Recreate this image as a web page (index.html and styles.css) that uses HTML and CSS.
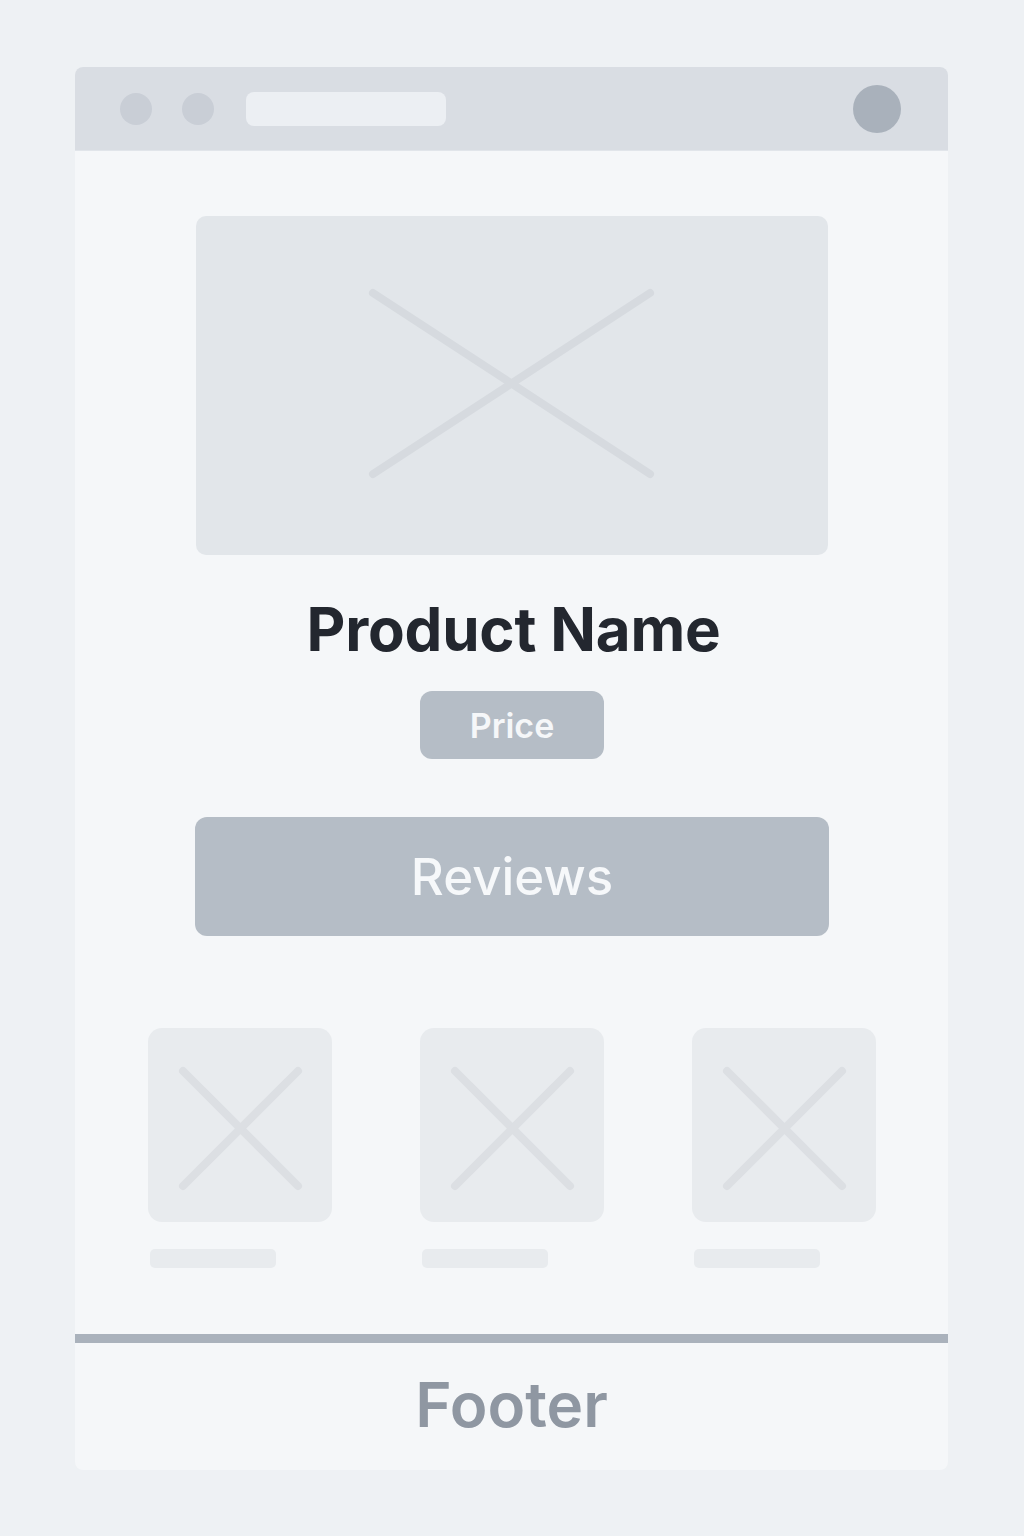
FILE: index.html
```html
<!DOCTYPE html>
<html lang="en">
<head>
<meta charset="utf-8">
<title>Product Wireframe</title>
<link rel="stylesheet" href="styles.css">
</head>
<body>
<div class="window">
  <div class="topbar">
    <span class="dot"></span>
    <span class="dot"></span>
    <span class="address"></span>
    <span class="spacer"></span>
    <span class="avatar"></span>
  </div>
  <main class="content">
    <div class="hero">
      <svg class="x-icon" viewBox="0 0 632 339" preserveAspectRatio="none">
        <line x1="177" y1="77" x2="454" y2="258"/>
        <line x1="454" y1="77" x2="177" y2="258"/>
      </svg>
    </div>
    <h1 class="title">Product Name</h1>
    <div class="price">Price</div>
    <div class="reviews">Reviews</div>
    <div class="thumbs">
      <div class="thumb">
        <div class="thumb-img">
          <svg viewBox="0 0 184 194"><line x1="35" y1="43" x2="150" y2="158"/><line x1="150" y1="43" x2="35" y2="158"/></svg>
        </div>
        <div class="caption"></div>
      </div>
      <div class="thumb">
        <div class="thumb-img">
          <svg viewBox="0 0 184 194"><line x1="35" y1="43" x2="150" y2="158"/><line x1="150" y1="43" x2="35" y2="158"/></svg>
        </div>
        <div class="caption"></div>
      </div>
      <div class="thumb">
        <div class="thumb-img">
          <svg viewBox="0 0 184 194"><line x1="35" y1="43" x2="150" y2="158"/><line x1="150" y1="43" x2="35" y2="158"/></svg>
        </div>
        <div class="caption"></div>
      </div>
    </div>
  </main>
  <footer class="footer">Footer</footer>
</div>
</body>
</html>
```

FILE: styles.css
```css
* { box-sizing: border-box; }
html, body { margin: 0; padding: 0; }
body {
  background: #eef1f4;
  font-family: Inter, "Noto Sans", "Liberation Sans", sans-serif;
  padding-top: 67px;
  height: 1536px;
}
.window {
  width: 873px;
  margin-left: 75px;
  background: #f5f7f9;
  border-radius: 8px;
  overflow: hidden;
  height: 1403px;
  display: flex;
  flex-direction: column;
}
.topbar {
  height: 84px;
  background: #d9dde3;
  display: flex;
  align-items: center;
  padding: 0 47px 0 45px;
  border-bottom: 1px solid #e1e5ea;
}
.dot {
  width: 32px;
  height: 32px;
  border-radius: 50%;
  background: #c9ced6;
  margin-right: 30px;
}
.address {
  width: 200px;
  height: 34px;
  border-radius: 8px;
  background: #eceff3;
  margin-left: 2px;
}
.spacer { flex: 1; }
.avatar {
  width: 48px;
  height: 48px;
  border-radius: 50%;
  background: #a9b1bb;
}
.content {
  flex: 1;
  display: flex;
  flex-direction: column;
  align-items: center;
  padding-top: 65px;
}
.hero {
  width: 632px;
  height: 339px;
  background: #e2e6ea;
  border-radius: 10px;
  margin-left: 1px;
}
.hero svg { width: 100%; height: 100%; display: block; }
.hero line, .thumb-img line {
  stroke: #d6dadf;
  stroke-width: 8;
  stroke-linecap: round;
}
.title {
  margin: 44px 0 0 4px;
  font-size: 60px;
  line-height: 60px;
  font-weight: 700;
  color: #23272f;
  letter-spacing: -0.2px;
}
.price {
  margin-top: 32px;
  width: 184px;
  height: 68px;
  border-radius: 12px;
  background: #b5bdc6;
  color: #f5f7f9;
  font-size: 34px;
  font-weight: 600;
  display: flex;
  align-items: center;
  justify-content: center;
  margin-left: 1px;
}
.reviews {
  margin-top: 58px;
  width: 634px;
  height: 119px;
  border-radius: 12px;
  background: #b5bdc6;
  color: #f6f8fa;
  font-size: 51px;
  font-weight: 500;
  display: flex;
  align-items: center;
  justify-content: center;
  margin-left: 1px;
}
.thumbs {
  margin-top: 92px;
  margin-left: 1px;
  display: grid;
  grid-template-columns: repeat(3, 184px);
  column-gap: 88px;
}
.thumb { display: flex; flex-direction: column; }
.thumb-img {
  width: 184px;
  height: 194px;
  border-radius: 14px;
  background: #e8ebee;
}
.thumb-img svg { width: 100%; height: 100%; display: block; }
.thumb-img line { stroke: #dcdfe3; }
.caption {
  margin-top: 27px;
  margin-left: 2px;
  width: 126px;
  height: 19px;
  border-radius: 5px;
  background: #e8ebee;
}
.footer {
  height: 136px;
  border-top: 9px solid #aab2bc;
  display: flex;
  align-items: center;
  justify-content: center;
  font-size: 62px;
  font-weight: 600;
  color: #8f97a2;
  padding-bottom: 4px;
}
```
